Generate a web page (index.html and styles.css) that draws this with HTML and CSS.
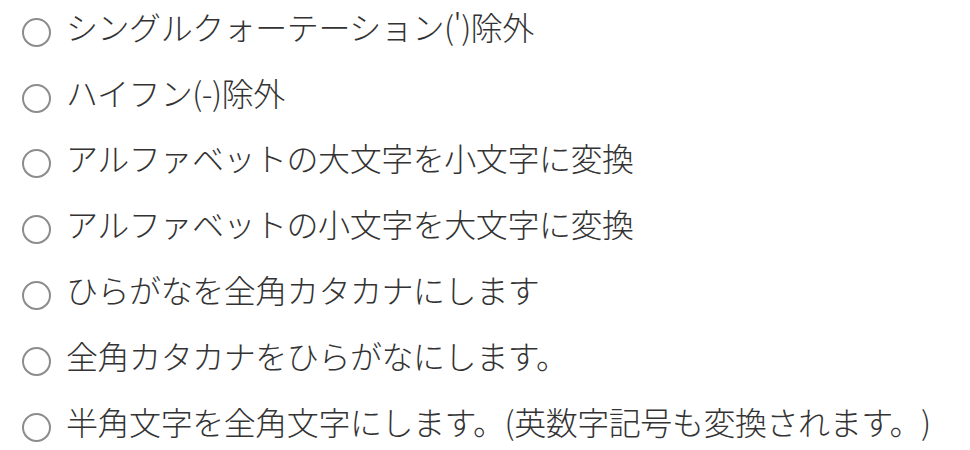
FILE: index.html
```html
<!DOCTYPE html>
<html lang="ja">
<head>
<meta charset="utf-8">
<link rel="stylesheet" href="styles.css">
</head>
<body>
<ul class="options">
  <li class="option"><span class="radio"></span><span class="label">シングルクォーテーション(')除外</span></li>
  <li class="option"><span class="radio"></span><span class="label">ハイフン(-)除外</span></li>
  <li class="option"><span class="radio"></span><span class="label">アルファベットの大文字を小文字に変換</span></li>
  <li class="option"><span class="radio"></span><span class="label">アルファベットの小文字を大文字に変換</span></li>
  <li class="option"><span class="radio"></span><span class="label">ひらがなを全角カタカナにします</span></li>
  <li class="option"><span class="radio"></span><span class="label">全角カタカナをひらがなにします。</span></li>
  <li class="option"><span class="radio"></span><span class="label">半角文字を全角文字にします。(英数字記号も変換されます。)</span></li>
</ul>
</body>
</html>
```
FILE: styles.css
```css
html, body {
  margin: 0;
  padding: 0;
  background: #ffffff;
}
body {
  font-family: "Noto Sans CJK JP", "Noto Sans", sans-serif;
  color: #333333;
}
.options {
  list-style: none;
  margin: -7px 0 0 0;
  padding: 0 0 0 22px;
  display: flex;
  flex-direction: column;
}
.option {
  height: 65.8px;
  display: flex;
  align-items: center;
  gap: 15px;
}
.radio {
  width: 25px;
  height: 25px;
  border: 2px solid #8c8c8c;
  border-radius: 50%;
  flex: none;
  margin-top: 13px;
}
.label {
  font-size: 32px;
  line-height: 40px;
  letter-spacing: -0.45px;
  font-weight: 300;
  text-spacing-trim: space-all;
  white-space: nowrap;
}
```
